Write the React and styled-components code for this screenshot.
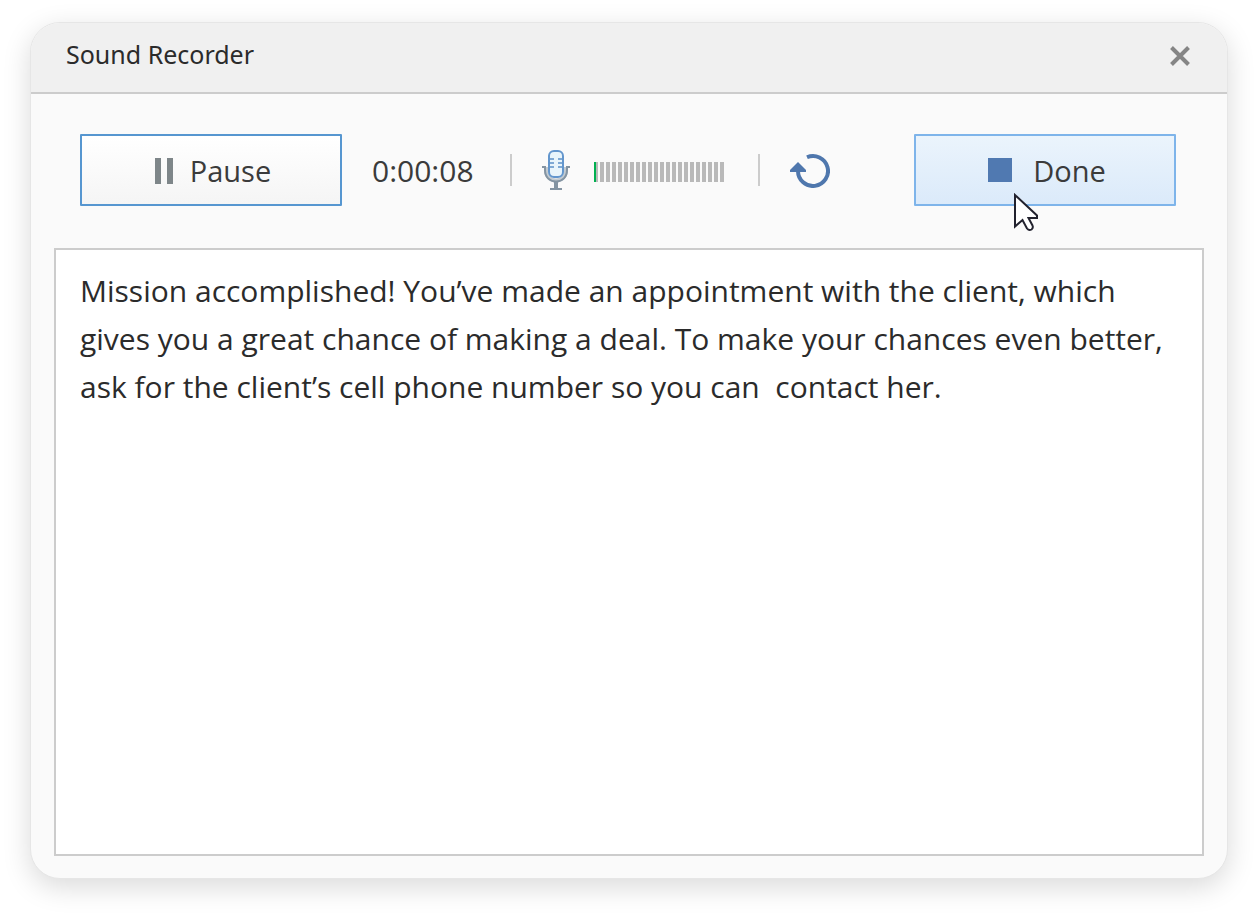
import { useState } from "react";
import styled, { createGlobalStyle } from "styled-components";

const COLORS = {
  text: "#2b2b2b",
  control: "#3b3b3b",
  line: "#cccccc",
  blue: "#5079b1",
  gray: "#7e8689",
  bar: "#b9b9b9",
  green: "#00b050",
};

const BAR_COUNT = 22;

const TRANSCRIPT =
  "Mission accomplished! You’ve made an appointment with the client, which gives you a great chance of making a deal. To make your chances even better, ask for the client’s cell phone number so you can  contact her.";

const App = () => {
  const [text, setText] = useState(TRANSCRIPT);

  return (
    <>
      <GlobalStyle />
      <Page>
        <Dialog aria-labelledby="recorder-title">
          <Header>
            <Title id="recorder-title">Sound Recorder</Title>
            <IconButton type="button" aria-label="Close">
              <CloseIcon />
            </IconButton>
          </Header>
          <Toolbar>
            <Button type="button">
              <PauseIcon />
              Pause
            </Button>
            <Time>0:00:08</Time>
            <Separator />
            <Level>
              <MicIcon />
              <Meter>
                {Array.from({ length: BAR_COUNT }, (_, i) => (
                  <Bar key={i} $active={i === 0} />
                ))}
              </Meter>
            </Level>
            <Separator />
            <IconButton type="button" aria-label="Restart">
              <RestartIcon />
            </IconButton>
            <DoneSlot>
              <Button type="button" $variant="hover">
                <StopIcon />
                Done
              </Button>
              <Pointer />
            </DoneSlot>
          </Toolbar>
          <Body>
            <Transcript
              aria-label="Transcript"
              spellCheck={false}
              value={text}
              onChange={(e) => setText(e.target.value)}
            />
          </Body>
        </Dialog>
      </Page>
    </>
  );
};

const CloseIcon = () => (
  <svg width="22" height="22" viewBox="0 0 22 22" aria-hidden="true">
    <path d="M2.500 2.500L19.500 19.500M19.500 2.500L2.500 19.500" stroke="#858585" strokeWidth="4" />
  </svg>
);

const MicIcon = () => (
  <svg width="28" height="40" viewBox="0 0 28 40" fill="none" aria-hidden="true">
    <path
      d="M4 17v3c0 6 4 10.500 10 10.500s10-4.500 10-10.500v-3"
      stroke="#c3cbd1"
      strokeWidth="4"
    />
    <path
      d="M0 17h3v3c0 7 4.500 11.500 11 11.500s11-4.500 11-11.500v-3h3"
      stroke="#8494a2"
      strokeWidth="2"
    />
    <path d="M12 31h4v7h4v2H8v-2h4z" fill="#8494a2" />
    <rect x="7" y="1" width="14" height="26" rx="5" fill="#e9f5fb" stroke="#6396cd" strokeWidth="2" />
    <path
      d="M8 9h4M8 13h4M8 17h4M16 9h4M16 13h4M16 17h4"
      stroke="#7fa9d4"
      strokeWidth="2"
    />
  </svg>
);

const RestartIcon = () => (
  <svg width="40" height="36" viewBox="0 0 40 36" aria-hidden="true">
    <path
      d="M17 5.250A15 15 0 1 1 8 19"
      fill="none"
      stroke="#4f77ad"
      strokeWidth="4"
    />
    <path d="M8 10L16 18v2H0v-2z" fill="#4f77ad" />
  </svg>
);

const Pointer = () => (
  <PointerSvg width="25" height="40" viewBox="0 0 25 40" aria-hidden="true">
    <path
      d="M1 2V33.500L8.500 27L13 35.500Q15 38 17.500 36.500Q19.500 35 18.500 32.500L14.500 25H23V22.500Z"
      fill="#fff"
      stroke="#22222e"
      strokeWidth="2"
    />
  </PointerSvg>
);

const GlobalStyle = createGlobalStyle`
  *, *::before, *::after {
    box-sizing: border-box;
  }

  body {
    margin: 0;
    background: #fff;
    color: ${COLORS.text};
    font-family: "Open Sans", "Noto Sans", sans-serif;
  }
`;

const Page = styled.main`
  display: flex;
  min-height: 100vh;
  padding: 22px 30px 37px;
`;

const Dialog = styled.section`
  flex: 1;
  min-width: 0;
  display: flex;
  flex-direction: column;
  background: #fafafa;
  border: 1px solid #e6e6e6;
  border-radius: 30px;
  overflow: hidden;
  box-shadow: 0 8px 28px rgba(0, 0, 0, 0.15);
`;

const Header = styled.header`
  display: flex;
  align-items: center;
  justify-content: space-between;
  height: 71px;
  padding: 0 36px 4px 35px;
  background: #f0f0f0;
  border-bottom: 2px solid ${COLORS.line};
`;

const Title = styled.h1`
  margin: 0;
  padding-bottom: 4px;
  font-family: "Noto Sans", sans-serif;
  font-size: 25px;
  font-weight: 400;
  line-height: 34px;
`;

const Toolbar = styled.div`
  display: flex;
  align-items: center;
  gap: 30px;
  padding: 40px 51px 42px 49px;
`;

const Button = styled.button`
  display: flex;
  align-items: center;
  justify-content: center;
  gap: 17px;
  width: 262px;
  height: 72px;
  padding: 0 0 0 4px;
  font: inherit;
  font-size: 29px;
  color: ${COLORS.control};
  border: 2px solid ${(p) => (p.$variant === "hover" ? "#7eb4ea" : "#5696d0")};
  border-radius: 1px;
  background: ${(p) =>
    p.$variant === "hover"
      ? "linear-gradient(#ebf4fc, #dbeafa)"
      : "linear-gradient(#ffffff, #f5f5f5)"};
`;

const IconButton = styled.button`
  display: flex;
  padding: 0;
  border: 0;
  background: none;
`;

const PauseIcon = styled.span`
  width: 18px;
  height: 26px;
  margin-top: 2px;
  border: solid ${COLORS.gray};
  border-width: 0 6px;
`;

const StopIcon = styled.span`
  width: 24px;
  height: 24px;
  margin-right: 4px;
  background: ${COLORS.blue};
`;

const Time = styled.time`
  width: 108px;
  padding-top: 2px;
  font-size: 30px;
  line-height: 40px;
  color: ${COLORS.control};
`;

const Separator = styled.span`
  width: 2px;
  height: 32px;
  background: ${COLORS.line};
`;

const Level = styled.div`
  display: flex;
  align-items: center;
  gap: 24px;
  width: 186px;
`;

const Meter = styled.div`
  display: flex;
  gap: 2px;
  padding-top: 4px;
`;

const Bar = styled.span`
  width: 4px;
  height: 20px;
  background: ${COLORS.bar};
  border-left: ${(p) => (p.$active ? `2px solid ${COLORS.green}` : "0")};
`;

const DoneSlot = styled.div`
  position: relative;
  margin-left: auto;
`;

const PointerSvg = styled.svg`
  position: absolute;
  left: 100px;
  top: 59px;
`;

const Body = styled.div`
  flex: 1;
  display: flex;
  padding: 0 23px 22px;
`;

const Transcript = styled.textarea`
  flex: 1;
  min-width: 0;
  padding: 17px 24px;
  font: inherit;
  font-size: 30px;
  line-height: 48px;
  color: ${COLORS.text};
  background: #fff;
  border: 2px solid ${COLORS.line};
  border-radius: 0;
  outline: none;
  resize: none;
`;

export default App;
